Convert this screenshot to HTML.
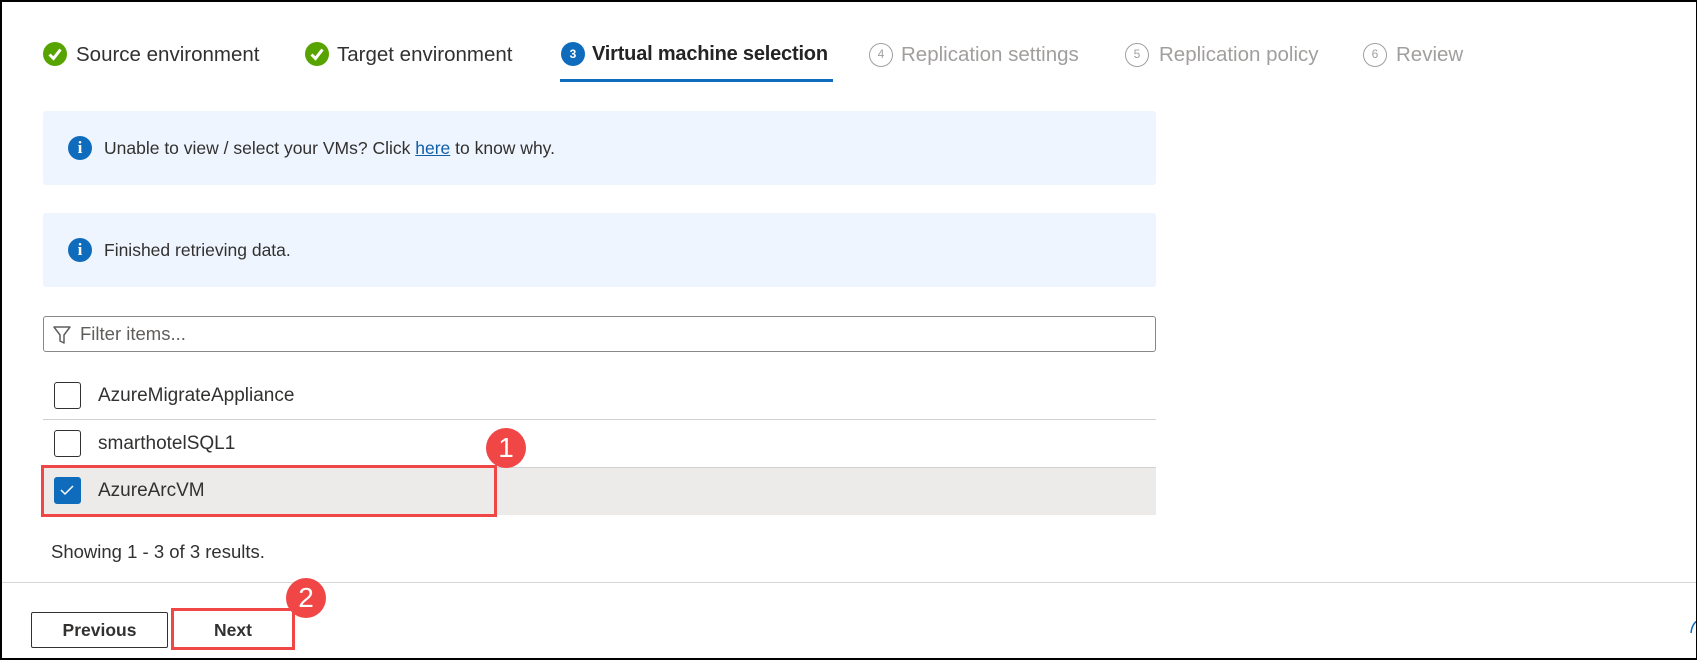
<!DOCTYPE html>
<html><head><meta charset="utf-8"><style>
*{margin:0;padding:0;box-sizing:border-box}
body{width:1697px;height:660px;overflow:hidden;background:#fff;font-family:"Liberation Sans",sans-serif;color:#323130;position:relative}
.frame{position:absolute;left:0;top:0;width:1697px;height:660px;border:2px solid #000;border-right-width:1px;border-bottom-width:2px}
.a{position:absolute;white-space:nowrap}
.step{font-size:20.5px;top:43px}
.circ{position:absolute;width:24px;height:24px;border-radius:50%}
.info{position:absolute;left:43px;width:1113px;background:#eef5fe;border-radius:3px}
.ii{position:absolute;left:68px;width:24px;height:24px;border-radius:50%;background:#0f6cbd;color:#fff;font:bold 17px "Liberation Serif",serif;text-align:center;line-height:24px}
.cb{position:absolute;left:54px;width:27px;height:27px;border:1.5px solid #323130;border-radius:3px;background:#fff}
.rowt{position:absolute;left:98px;font-size:19px}
.sep{position:absolute;left:43px;width:1113px;height:1px;background:#d1d1d1}
.badge{position:absolute;width:40px;height:40px;border-radius:50%;background:#f04646;color:#fff;font-size:28px;text-align:center;line-height:40px}
.num{border:1.5px solid #a0a0a0;color:#a0a0a0;font-size:12px;text-align:center;line-height:21px}
</style></head><body>
<div class="circ" style="left:43px;top:42px;background:#57a300"><svg width="24" height="24"><path d="M6.5 12.5l4 4 7-9" stroke="#fff" stroke-width="3" fill="none"/></svg></div>
<div class="a step" style="left:76px">Source environment</div>
<div class="circ" style="left:305px;top:42px;background:#57a300"><svg width="24" height="24"><path d="M6.5 12.5l4 4 7-9" stroke="#fff" stroke-width="3" fill="none"/></svg></div>
<div class="a step" style="left:337px">Target environment</div>
<div class="circ" style="left:561px;top:42px;background:#0f6cbd;color:#fff;font-size:12px;font-weight:bold;text-align:center;line-height:24px">3</div>
<div class="a step" style="left:592px;font-weight:bold;color:#242424;font-size:20px;letter-spacing:-0.2px">Virtual machine selection</div>
<div class="a" style="left:560px;top:79px;width:273px;height:3px;background:#0f6cbd"></div>
<div class="circ num" style="left:869px;top:43px">4</div>
<div class="a step" style="left:901px;color:#a19f9d">Replication settings</div>
<div class="circ num" style="left:1125px;top:43px">5</div>
<div class="a step" style="left:1159px;color:#a19f9d">Replication policy</div>
<div class="circ num" style="left:1363px;top:43px">6</div>
<div class="a step" style="left:1396px;color:#a19f9d">Review</div>

<div class="info" style="top:111px;height:74px"></div>
<div class="ii" style="top:136px">i</div>
<div class="a" style="left:104px;top:138px;font-size:17.5px">Unable to view / select your VMs? Click <span style="color:#0f5ea8;text-decoration:underline">here</span> to know why.</div>
<div class="info" style="top:213px;height:74px"></div>
<div class="ii" style="top:238px">i</div>
<div class="a" style="left:104px;top:240px;font-size:17.5px">Finished retrieving data.</div>

<div class="a" style="left:43px;top:316px;width:1113px;height:36px;border:1px solid #8a8886;border-radius:3px"></div>
<svg class="a" style="left:52px;top:324px" width="20" height="22"><path d="M2 3h16l-6 8v8l-4-2v-6z" stroke="#605e5c" stroke-width="1.5" fill="none" stroke-linejoin="round"/></svg>
<div class="a" style="left:80px;top:323px;font-size:18.5px;color:#605e5c">Filter items...</div>

<div class="cb" style="top:382px"></div>
<div class="rowt" style="top:385px">AzureMigrateAppliance</div>
<div class="sep" style="top:419px"></div>
<div class="cb" style="top:430px"></div>
<div class="rowt" style="top:433px">smarthotelSQL1</div>
<div class="sep" style="top:467px"></div>
<div class="a" style="left:43px;top:468px;width:1113px;height:47px;background:#edebe9"></div>
<div class="cb" style="top:477px;background:#0f6cbd;border-color:#0f6cbd"><svg width="24" height="24"><path d="M6 12l4 4 8-8" stroke="#fff" stroke-width="1.5" fill="none"/></svg></div>
<div class="rowt" style="top:480px">AzureArcVM</div>
<div class="a" style="left:41px;top:465px;width:456px;height:52px;border:3px solid #f04646"></div>
<div class="badge" style="left:486px;top:428px">1</div>

<div class="a" style="left:51px;top:541px;font-size:18.5px">Showing 1 - 3 of 3 results.</div>
<div class="a" style="left:0;top:582px;width:1697px;height:1px;background:#d6d6d6"></div>
<div class="a" style="left:31px;top:612px;width:137px;height:36px;border:1px solid #323130;border-radius:2px;font-size:17.5px;font-weight:bold;text-align:center;line-height:34px">Previous</div>
<div class="a" style="left:173px;top:612px;width:120px;height:36px;font-size:17.5px;font-weight:bold;text-align:center;line-height:36px">Next</div>
<div class="a" style="left:171px;top:608px;width:124px;height:42px;border:3px solid #f04646"></div>
<div class="badge" style="left:286px;top:578px">2</div>
<svg class="a" style="left:1690px;top:620px" width="7" height="14"><path d="M1 13Q2 4 7 1" stroke="#0f6cbd" stroke-width="1.5" fill="none"/></svg>
<div class="frame"></div>
</body></html>
